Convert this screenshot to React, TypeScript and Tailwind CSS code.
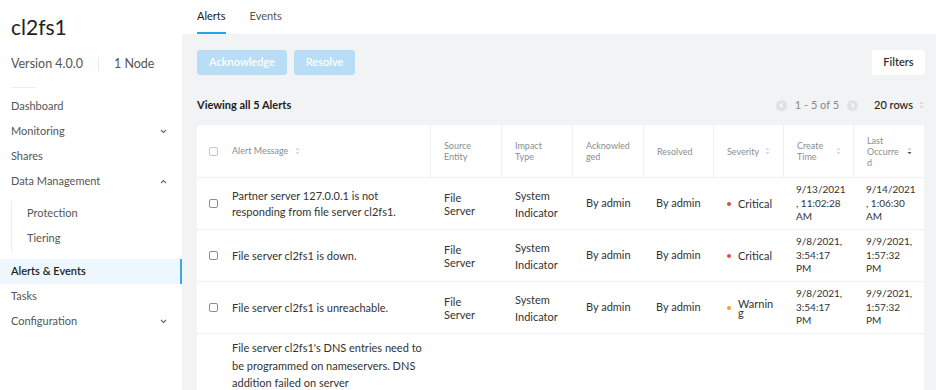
import { ReactNode } from "react";

type Alert = {
    message: string;
    source: string;
    impact: string;
    severity: "Critical" | "Warning" | "";
    created: string;
    last: string;
    acked: string;
    resolved: string;
};

const alerts: Alert[] = [
    {
        message: "Partner server 127.0.0.1 is not responding from file server cl2fs1.",
        source: "File Server",
        impact: "System Indicator",
        acked: "By admin",
        resolved: "By admin",
        severity: "Critical",
        created: "9/13/2021, 11:02:28 AM",
        last: "9/14/2021, 1:06:30 AM",
    },
    {
        message: "File server cl2fs1 is down.",
        source: "File Server",
        impact: "System Indicator",
        acked: "By admin",
        resolved: "By admin",
        severity: "Critical",
        created: "9/8/2021, 3:54:17 PM",
        last: "9/9/2021, 1:57:32 PM",
    },
    {
        message: "File server cl2fs1 is unreachable.",
        source: "File Server",
        impact: "System Indicator",
        acked: "By admin",
        resolved: "By admin",
        severity: "Warning",
        created: "9/8/2021, 3:54:17 PM",
        last: "9/9/2021, 1:57:32 PM",
    },
    {
        message: "File server cl2fs1's DNS entries need to be programmed on nameservers. DNS addition failed on server",
        source: "",
        impact: "",
        acked: "",
        resolved: "",
        severity: "",
        created: "",
        last: "",
    },
];

const cols = "grid grid-cols-[25px_209px_71px_71px_71px_70px_70px_70px_70px]";

function Chevron({ up }: { up?: boolean }) {
    return (
        <svg width="7" height="5" viewBox="0 0 7 5" className="mr-[15px]">
            <path d={up ? "M1 4 L3.5 1.5 L6 4" : "M1 1 L3.5 3.5 L6 1"} fill="none" stroke="#666" strokeWidth="1.1" />
        </svg>
    );
}

function SortIcon({ active }: { active?: boolean }) {
    return (
        <svg width="5" height="8" viewBox="0 0 5 8" className="shrink-0">
            <path d="M0.5 3 L2.5 0.8 L4.5 3 Z" fill={active ? "#ccc" : "#d4d6da"} />
            <path d="M0.5 5 L2.5 7.2 L4.5 5 Z" fill={active ? "#555" : "#d4d6da"} />
        </svg>
    );
}

function NavItem({ label, active, chevron }: { label: string; active?: boolean; chevron?: "up" | "down" }) {
    return (
        <div
            className={
                "h-[25px] flex items-center justify-between pl-[11px] " +
                (active ? "bg-[#eef7fd] border-r-2 border-[#3ea7f2] text-[#222] font-semibold" : "text-[#555]")
            }
        >
            <span>{label}</span>
            {chevron && <Chevron up={chevron === "up"} />}
        </div>
    );
}

function Checkbox({ light }: { light?: boolean }) {
    return <div className={"w-[9px] h-[9px] rounded-[2px] border " + (light ? "border-[#c4c7cc]" : "border-[#8a8d92]")} />;
}

function HeadCell({
    children,
    sort,
    active,
    last,
    pr = "pr-[14px]",
}: {
    children: ReactNode;
    sort?: boolean;
    active?: boolean;
    last?: boolean;
    pr?: string;
}) {
    return (
        <div className={"flex items-center gap-[6px] pl-[13px] " + pr + " " + (last ? "" : "border-r border-[#eef0f2]")}>
            <span className="[overflow-wrap:anywhere] leading-[11px]">{children}</span>
            {sort && <SortIcon active={active} />}
        </div>
    );
}

function Severity({ level }: { level: Alert["severity"] }) {
    if (!level) return null;
    return (
        <div className="flex items-center gap-[7px]">
            <span className={"w-[4px] h-[4px] rounded-full shrink-0 " + (level === "Critical" ? "bg-[#ef4444]" : "bg-[#f5a623]")} />
            <span className="[overflow-wrap:anywhere] leading-[9px]">{level}</span>
        </div>
    );
}

function Circle({ left }: { left?: boolean }) {
    return (
        <svg width="11" height="11" viewBox="0 0 11 11">
            <circle cx="5.5" cy="5.5" r="5.5" fill="#dfe1e5" />
            <path d={left ? "M6.3 3.5 L4.3 5.5 L6.3 7.5" : "M4.7 3.5 L6.7 5.5 L4.7 7.5"} fill="none" stroke="#fff" strokeWidth="1.2" />
        </svg>
    );
}

export default function App() {
    return (
        <div className="w-[936px] h-[390px] flex overflow-hidden bg-white text-[11px] text-[#333] font-['Lato',sans-serif]">
            <aside className="w-[182px] shrink-0 bg-white">
                <h1 className="pl-[11px] pt-[11px] text-[21px] leading-[32px] text-[#222]">cl2fs1</h1>
                <div className="flex items-center pl-[11px] mt-[12px] text-[12.5px] text-[#555]">
                    <span>Version 4.0.0</span>
                    <span className="w-px h-[14px] bg-[#e6e7e9] mx-[15px]" />
                    <span>1 Node</span>
                </div>
                <div className="ml-[11px] mt-[13px] w-[25px] h-px bg-[#eeeff1]" />
                <nav className="mt-[6px]">
                    <NavItem label="Dashboard" />
                    <NavItem label="Monitoring" chevron="down" />
                    <NavItem label="Shares" />
                    <NavItem label="Data Management" chevron="up" />
                    <div className="ml-[11px] mt-[7px] mb-[8px] border-l border-[#ececee] pl-[15px] text-[#555]">
                        <div className="h-[25px] flex items-center">Protection</div>
                        <div className="h-[25px] flex items-center">Tiering</div>
                    </div>
                    <NavItem label="Alerts & Events" active />
                    <NavItem label="Tasks" />
                    <NavItem label="Configuration" chevron="down" />
                </nav>
            </aside>

            <main className="flex-1 flex flex-col">
                <div className="h-[34px] bg-white flex gap-[24px] pl-[15px] shrink-0">
                    <div className="h-full flex items-center border-b-[2px] border-[#22a5f7] text-[#222] pt-[1px]">Alerts</div>
                    <div className="h-full flex items-center text-[#555] pb-[1px]">Events</div>
                </div>

                <div className="flex-1 bg-[#f2f3f5] pl-[15px] pr-[12px] pt-[16px]">
                    <div className="flex items-center justify-between">
                        <div className="flex gap-[7px]">
                            <button className="h-[25px] w-[90px] rounded-[3px] bg-[#b8ddf6] text-white font-semibold">Acknowledge</button>
                            <button className="h-[25px] w-[61px] rounded-[3px] bg-[#b8ddf6] text-white font-semibold">Resolve</button>
                        </div>
                        <button className="h-[25px] w-[53px] rounded-[3px] bg-white text-[#333] font-semibold mr-[-1px]">Filters</button>
                    </div>

                    <div className="flex items-center justify-between mt-[20px] h-[20px]">
                        <span className="font-bold text-[#222]">Viewing all 5 Alerts</span>
                        <div className="flex items-center text-[#888]">
                            <Circle left />
                            <span className="mx-[8px]">1 - 5 of 5</span>
                            <Circle />
                            <span className="ml-[16px] mr-[6px] text-[#222] font-medium">20 rows</span>
                            <SortIcon />
                        </div>
                    </div>

                    <div className="mt-[10px] w-[727px] bg-white rounded-t-[3px]">
                        <div className={cols + " h-[53px] text-[9px] text-[#8a8d92] border-b border-[#eef0f2]"}>
                            <div className="flex items-center pl-[12px]">
                                <Checkbox light />
                            </div>
                            <div className="flex items-center gap-[7px] pl-[10px] border-r border-[#eef0f2]">
                                <span>Alert Message</span>
                                <SortIcon />
                            </div>
                            <HeadCell>Source Entity</HeadCell>
                            <HeadCell>Impact Type</HeadCell>
                            <HeadCell pr="pr-[11px]">Acknowledged</HeadCell>
                            <HeadCell>Resolved</HeadCell>
                            <HeadCell sort pr="pr-[12px]">Severity</HeadCell>
                            <HeadCell sort pr="pr-[12px]">Create Time</HeadCell>
                            <HeadCell sort active last pr="pr-[12px]">Last Occurred</HeadCell>
                        </div>

                        {alerts.map((a, i) => {
                            const filler = i === alerts.length - 1;
                            return (
                                <div
                                    key={i}
                                    className={
                                        cols +
                                        (filler ? " pt-[5px] h-[70px]" : " h-[52px] items-center border-b border-[#eef0f2]")
                                    }
                                >
                                    <div className="pl-[12px] flex items-center">{!filler && <Checkbox />}</div>
                                    <div className={"pl-[10px] " + (filler ? "leading-[17.5px]" : "leading-[16px]")}>
                                        {a.message}
                                    </div>
                                    <div className="pl-[13px] pr-[12px] leading-[13px]">{a.source}</div>
                                    <div className="pl-[13px] pr-[12px] leading-[17px]">{a.impact}</div>
                                    <div className="pl-[13px] pr-[8px]">{a.acked}</div>
                                    <div className="pl-[12px] pr-[8px]">{a.resolved}</div>
                                    <div className="pl-[13px] pr-[9px]">
                                        <Severity level={a.severity} />
                                    </div>
                                    <div className="pl-[12px] pr-[8px] text-[10px] leading-[13.5px] [overflow-wrap:anywhere]">{a.created}</div>
                                    <div className="pl-[12px] pr-[8px] text-[10px] leading-[13.5px] [overflow-wrap:anywhere]">{a.last}</div>
                                </div>
                            );
                        })}
                    </div>
                </div>
            </main>
        </div>
    );
}
